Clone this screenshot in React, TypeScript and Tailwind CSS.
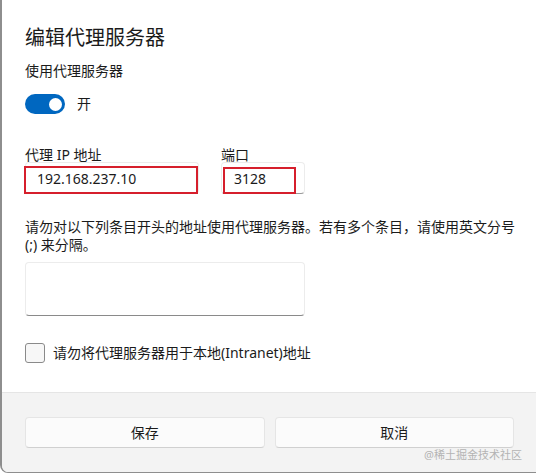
import React from "react";

const font = { fontFamily: '"Noto Sans", "Noto Sans CJK SC", sans-serif' };

export default function App() {
  return (
    <div
      className="relative w-[536px] h-[473px] bg-white flex flex-col border-l-2 border-b border-[#8e8e8e] rounded-bl-[8px] overflow-hidden text-[#1b1b1b]"
      style={font}
    >
      <div className="flex-1 pl-[23px] pr-[20px] pt-[24px] flex flex-col items-start">
        <div className="text-[20px] leading-[28px]">编辑代理服务器</div>
        <div className="mt-[9px] text-[14px] leading-[20px]">使用代理服务器</div>
        <div className="mt-[13px] flex items-center gap-[12px]">
          <div className="w-[40px] h-[20px] rounded-full bg-[#0067c0] flex items-center justify-end pr-[3px]">
            <div className="w-[13px] h-[13px] rounded-full bg-white" />
          </div>
          <span className="text-[14px] leading-[20px]">开</span>
        </div>
        <div className="mt-[31px] flex gap-[22px]">
          <div className="flex flex-col">
            <div className="text-[14px] leading-[20px]">代理 IP 地址</div>
            <div className="relative mt-[-3px] w-[174px] h-[32px] rounded-[4px] border border-[#ececec] border-b-[#9a9a9a] bg-white flex items-center pl-[11px] text-[14px]">
              192.168.237.10
              <div className="absolute left-[-2px] top-[3px] w-[174px] h-[28px] border-2 border-[#d61f2c]" />
            </div>
          </div>
          <div className="flex flex-col">
            <div className="text-[14px] leading-[20px]">端口</div>
            <div className="relative mt-[-3px] w-[84px] h-[32px] rounded-[4px] border border-[#ececec] border-b-[#9a9a9a] bg-white flex items-center pl-[12px] text-[14px]">
              3128
              <div className="absolute left-[1px] top-[4px] w-[73px] h-[27px] border-2 border-[#d61f2c]" />
            </div>
          </div>
        </div>
        <div className="mt-[24px] text-[14px] leading-[18px]">
          请勿对以下列条目开头的地址使用代理服务器。若有多个条目，请使用英文分号
          <br />
          (;) 来分隔。
        </div>
        <div className="mt-[8px] w-[280px] h-[54px] rounded-[4px] border border-[#ececec] border-b-[#8a8a8a] bg-white" />
        <div className="mt-[27px] flex items-center gap-[8px]">
          <div className="w-[20px] h-[20px] rounded-[3px] border border-[#8a8a8a] bg-[#f7f7f7]" />
          <span className="text-[14px] leading-[20px]">请勿将代理服务器用于本地(Intranet)地址</span>
        </div>
      </div>
      <div className="h-[80px] bg-[#f3f3f3] border-t border-[#e5e5e5] pl-[23px] pr-[22px] pt-[24px]">
        <div className="grid grid-cols-2 gap-[10px]">
          <div className="h-[31px] rounded-[4px] bg-[#fbfbfb] border border-[#e5e5e5] border-b-[#d0d0d0] flex items-center justify-center text-[14px]">
            保存
          </div>
          <div className="h-[31px] rounded-[4px] bg-[#fbfbfb] border border-[#e5e5e5] border-b-[#d0d0d0] flex items-center justify-center text-[14px]">
            取消
          </div>
        </div>
      </div>
      <div className="absolute left-[422px] top-[447px] text-[11px] leading-[16px] text-[#b4b4b4]">
        @稀土掘金技术社区
      </div>
    </div>
  );
}
